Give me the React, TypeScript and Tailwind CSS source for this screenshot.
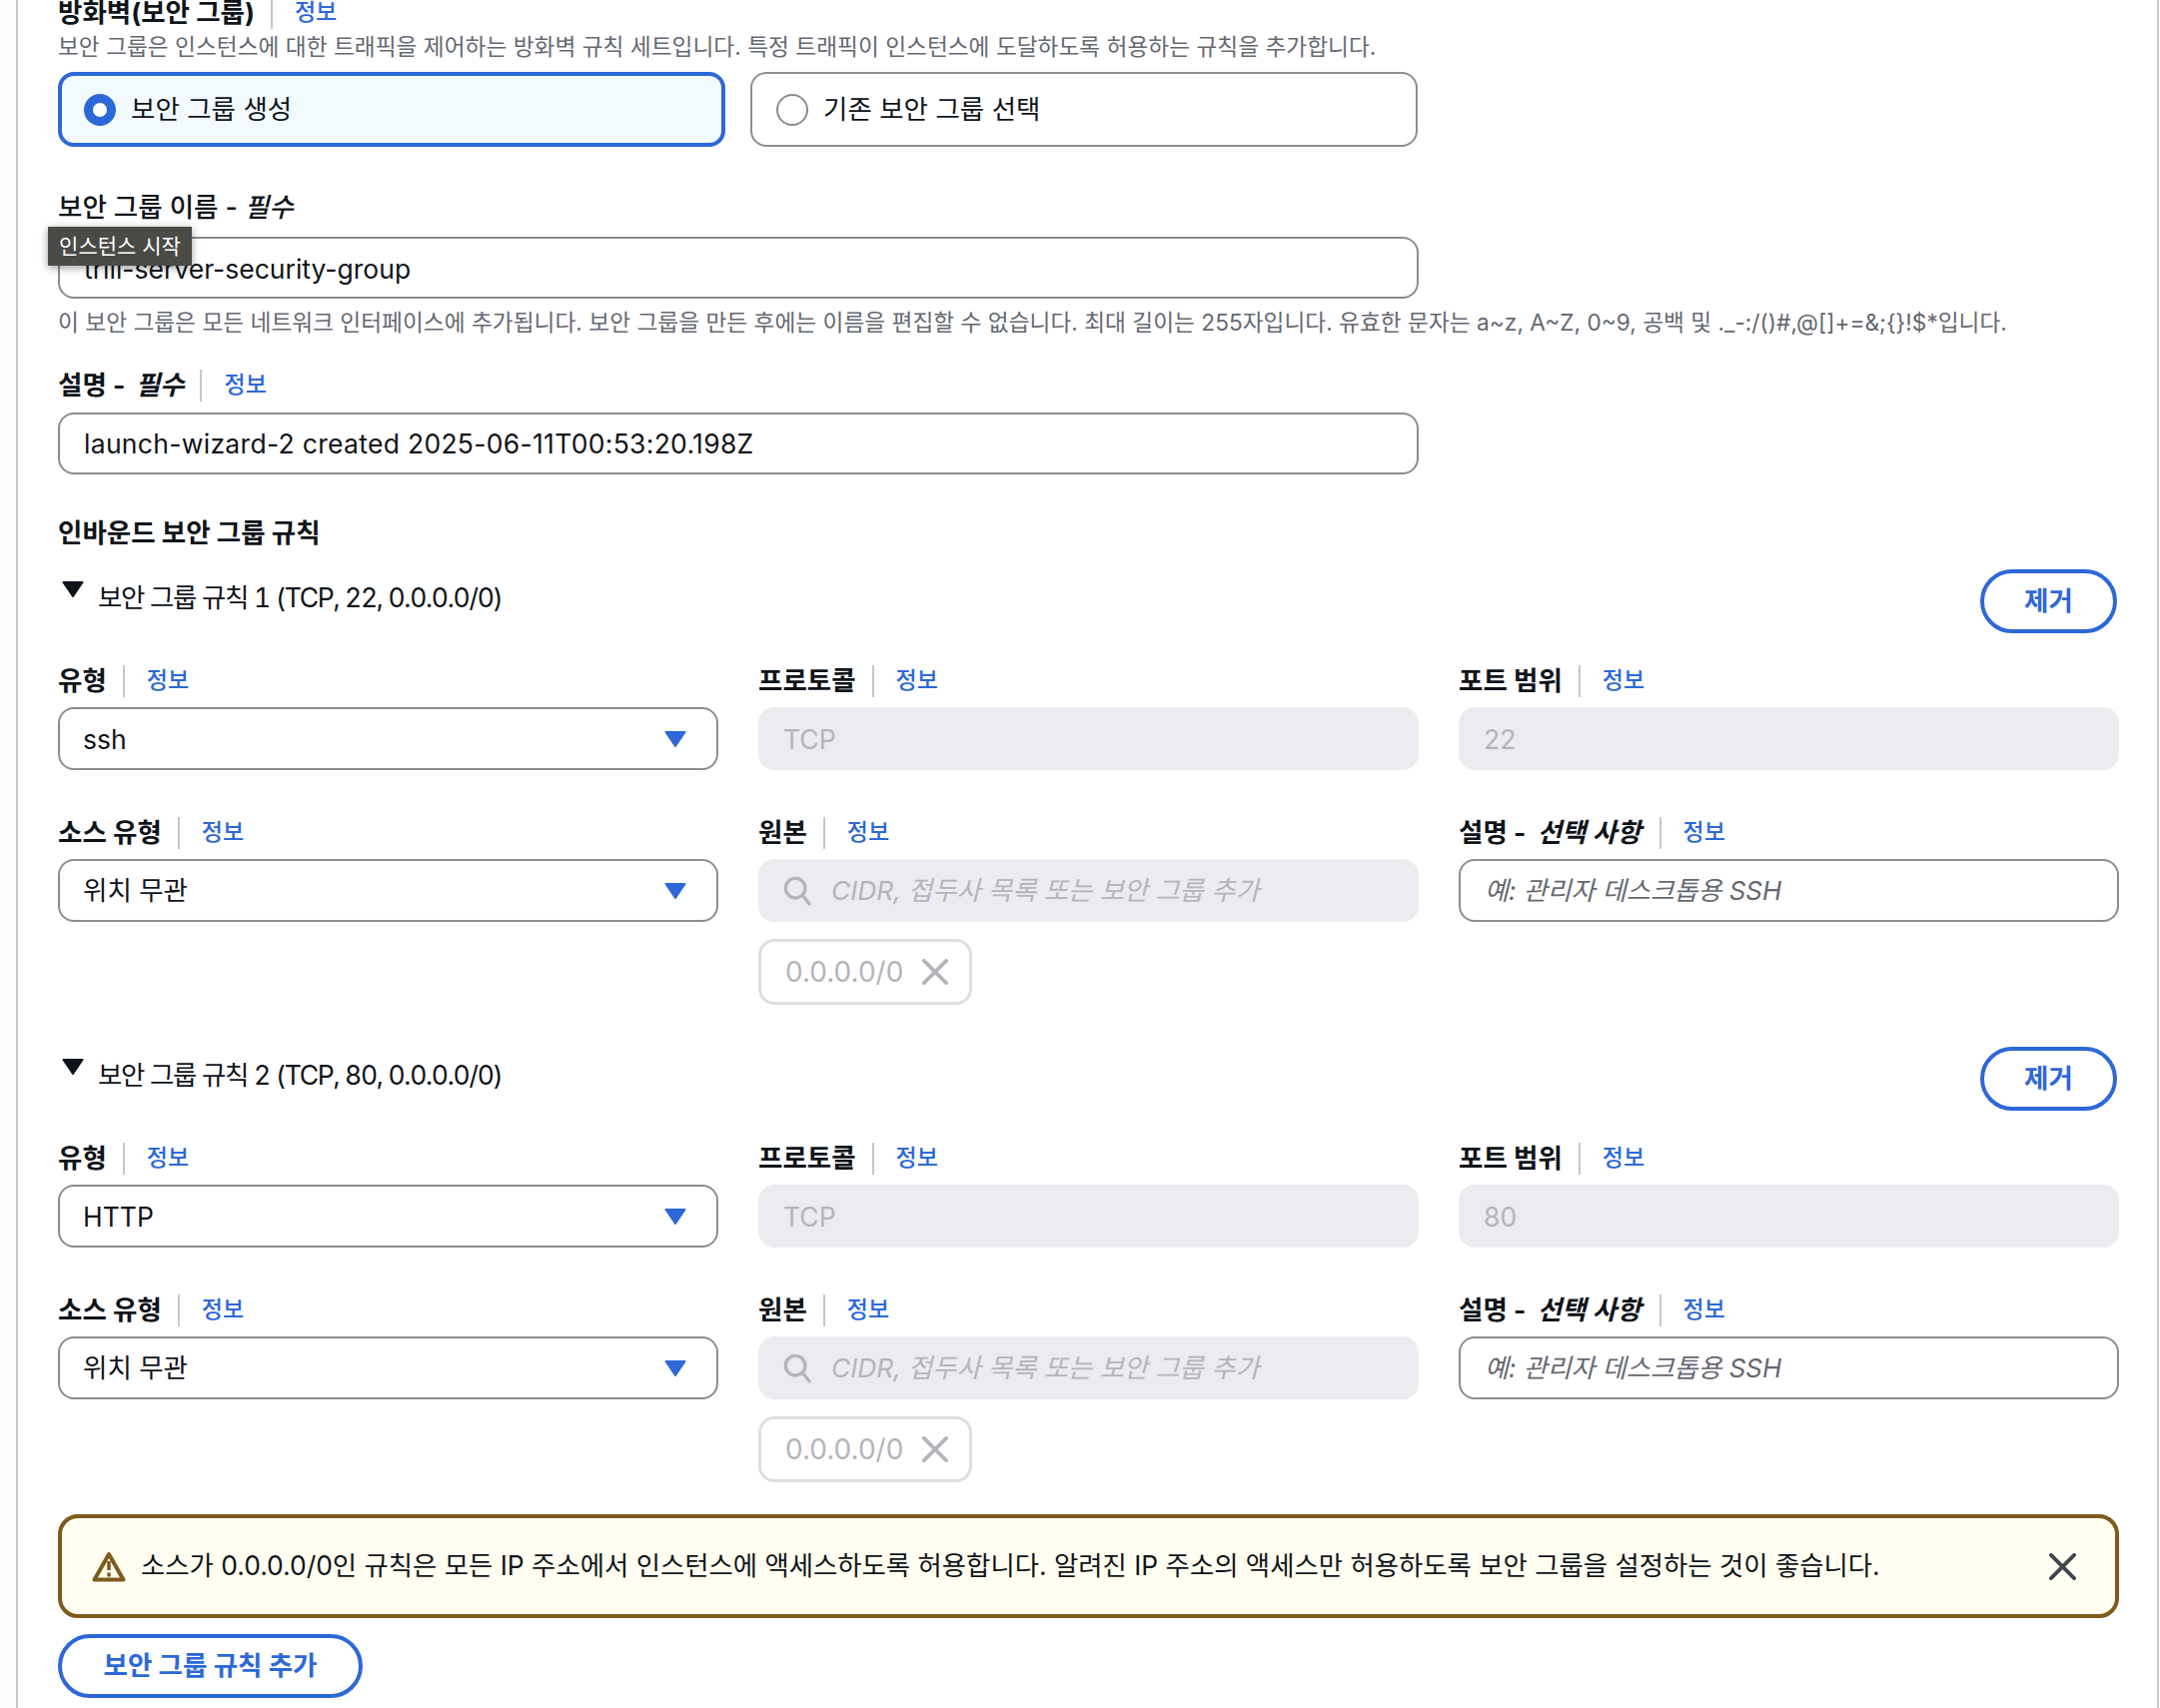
import React from 'react';

const Info: React.FC = () => (
  <>
    <span className="ml-[16px] mr-[22px] h-[32px] w-[2px] bg-[#c6c6cd]" />
    <a className="mb-[2px] text-[23px] font-medium text-[#2d68d8]">정보</a>
  </>
);

const FieldLabel: React.FC<{ children: React.ReactNode }> = ({ children }) => (
  <div className="flex h-[32px] items-center text-[26.5px] font-bold leading-[32px] text-[#0f141a]">
    <span className="mb-[2px]">{children}</span>
    <Info />
  </div>
);

const Caret: React.FC = () => (
  <svg viewBox="0 0 22 16" className="h-[16px] w-[22px]">
    <path d="M1.5 1h19L11 15z" fill="#2d68d8" stroke="#2d68d8" strokeWidth="2" strokeLinejoin="round" />
  </svg>
);

const Select: React.FC<{ value: string; latin?: boolean }> = ({ value, latin }) => (
  <div className="mt-[10px] flex h-[63px] items-center justify-between rounded-[16px] border-2 border-[#8c8c94] bg-white pl-[23px] pr-[30px] text-[26.5px] text-[#0f141a]">
    <span className={latin ? 'pt-[2px]' : ''}>{value}</span>
    <Caret />
  </div>
);

const Disabled: React.FC<{ value: string }> = ({ value }) => (
  <div className="mt-[10px] flex h-[63px] items-center rounded-[16px] bg-[#ebebf0] px-[25px] pt-[2px] text-[26.5px] text-[#b4b4bb]">
    {value}
  </div>
);

const CloseIcon: React.FC<{ color: string; size: number }> = ({ color, size }) => (
  <svg viewBox="0 0 28 28" width={size} height={size} fill="none" stroke={color} strokeWidth="4" strokeLinecap="round">
    <path d="M2 2l24 24M26 2L2 26" />
  </svg>
);

// one inbound rule block
const Rule: React.FC<{ index: number; port: string; type: string }> = ({ index, port, type }) => (
  <div>
    <div className="flex h-[63px] items-start justify-between">
      <div className="flex items-start pt-[12px] text-[26.5px] tabular-nums leading-[32px] tracking-[-1.3px] text-[#0f141a]">
        <svg viewBox="0 0 22 16" className="ml-[4px] h-[16px] w-[22px]">
          <path d="M1.5 1h19L11 15z" fill="#0f141a" stroke="#0f141a" strokeWidth="2" strokeLinejoin="round" />
        </svg>
        <span className="ml-[14px]">
          보안 그룹 규칙 {index} (TCP, {port}, 0.0.0.0/0)
        </span>
      </div>
      <button className="mr-[2px] h-[64px] w-[137px] rounded-[32px] border-[4px] border-[#2d68d8] text-[26.5px] font-bold text-[#2d68d8]">
        제거
      </button>
    </div>

    <div className="mt-[33px] grid grid-cols-3 gap-x-[40px] gap-y-[47px]">
      <div>
        <FieldLabel>유형</FieldLabel>
        <Select value={type} latin />
      </div>
      <div>
        <FieldLabel>프로토콜</FieldLabel>
        <Disabled value="TCP" />
      </div>
      <div>
        <FieldLabel>포트 범위</FieldLabel>
        <Disabled value={port} />
      </div>

      <div>
        <FieldLabel>소스 유형</FieldLabel>
        <Select value="위치 무관" />
      </div>
      <div>
        <FieldLabel>원본</FieldLabel>
        <div className="mt-[10px] flex h-[63px] items-center rounded-[16px] bg-[#ebebf0] pl-[25px] text-[26.3px] italic text-[#b4b4bb]">
          <svg viewBox="0 0 30 32" className="mr-[20px] h-[30px] w-[28px]" fill="none" stroke="#b4b4bb" strokeWidth="3.5" strokeLinecap="round">
            <circle cx="13" cy="13" r="10.5" />
            <path d="M21 21l7 9" />
          </svg>
          CIDR, 접두사 목록 또는 보안 그룹 추가
        </div>
        <div className="mt-[17px] flex h-[66px] w-[214px] items-center rounded-[16px] border-[3px] border-[#dedee3] bg-white pl-[24px] text-[28px] text-[#b4b4bb]">
          0.0.0.0/0
          <span className="ml-[19px] flex">
            <CloseIcon color="#b4b4bb" size={26} />
          </span>
        </div>
      </div>
      <div>
        <FieldLabel>
          설명 -&nbsp;<i className="ml-[5px] mr-[2px]">선택 사항</i>
        </FieldLabel>
        <div className="mt-[10px] flex h-[63px] items-center rounded-[16px] border-2 border-[#8c8c94] bg-white pl-[24px] text-[26px] italic text-[#656871]">
          예: 관리자 데스크톱용 SSH
        </div>
      </div>
    </div>
  </div>
);

export default function App() {
  return (
    <div className="relative flex h-[1710px] w-[2162px] overflow-hidden bg-white font-['Inter','Noto_Sans_CJK_KR',sans-serif] text-[#0f141a]">
      <div className="w-[16px] shrink-0 bg-[#fbfbfb]" />
      <main className="w-[2145px] shrink-0 border-x-[2px] border-[#c6c6cd] bg-white pl-[40px] pr-[38px]">
        {/* firewall heading, cut off by the top of the page */}
        <div className="mt-[-3px] flex h-[32px] items-center text-[26.5px] font-bold">
          방화벽(보안 그룹)
          <Info />
        </div>
        <p className="mt-[2px] text-[22.7px] leading-[32px] text-[#656871]">
          보안 그룹은 인스턴스에 대한 트래픽을 제어하는 방화벽 규칙 세트입니다. 특정 트래픽이 인스턴스에 도달하도록 허용하는 규칙을 추가합니다.
        </p>

        <div className="mt-[9px] flex gap-x-[25px]">
          <div className="flex h-[75px] w-[668px] items-center rounded-[16px] border-[4px] border-[#2d68d8] bg-[#f3faff] pl-[22px] text-[26.5px]">
            <span className="h-[32px] w-[32px] rounded-full border-[9px] border-[#2d68d8] bg-white" />
            <span className="ml-[15px] pt-[1px]">보안 그룹 생성</span>
          </div>
          <div className="flex h-[75px] w-[668px] items-center rounded-[16px] border-2 border-[#8c8c94] bg-white pl-[24px] text-[26.5px]">
            <span className="h-[32px] w-[32px] rounded-full border-2 border-[#8c8c94] bg-white" />
            <span className="ml-[15px] pt-[1px]">기존 보안 그룹 선택</span>
          </div>
        </div>

        <div className="mt-[44px] text-[26.5px] font-medium leading-[32px]">
          보안 그룹 이름 - <i>필수</i>
        </div>
        <div className="mt-[14px] flex h-[62px] w-[1362px] items-center rounded-[16px] border-2 border-[#8c8c94] pl-[24px] pt-[3px] text-[26.5px]">
          trill-server-security-group
        </div>
        <p className="mt-[8px] text-[22.7px] leading-[32px] text-[#656871]">
          이 보안 그룹은 모든 네트워크 인터페이스에 추가됩니다. 보안 그룹을 만든 후에는 이름을 편집할 수 없습니다. 최대 길이는 255자입니다. 유효한 문자는 a~z, A~Z, 0~9, 공백 및 ._-:/()#,@[]+=&amp;;{'{}'}!$*입니다.
        </p>

        <div className="mt-[31px] flex h-[32px] items-center text-[26.5px] font-bold">
          설명 -&nbsp;<i className="ml-[4px]">필수</i>
          <Info />
        </div>
        <div className="mt-[11px] flex h-[62px] w-[1362px] items-center rounded-[16px] border-2 border-[#8c8c94] pl-[24px] pt-[2px] text-[26.5px] tracking-[0.3px]">
          launch-wizard-2 created 2025-06-11T00:53:20.198Z
        </div>

        <div className="mt-[42px] text-[26.5px] font-bold leading-[32px]">인바운드 보안 그룹 규칙</div>

        <div className="mt-[21px]">
          <Rule index={1} port="22" type="ssh" />
        </div>
        <div className="mt-[42px]">
          <Rule index={2} port="80" type="HTTP" />
        </div>

        <div className="mt-[32px] flex h-[104px] items-center rounded-[20px] border-[4px] border-[#7e5a1c] bg-[#fffef0] pl-[30px] pr-[39px] text-[26.4px]">
          <svg viewBox="0 0 34 31" className="h-[31px] w-[34px] shrink-0" fill="none" stroke="#7e5a1c" strokeWidth="4" strokeLinejoin="round">
            <path d="M17 3L2.5 28.5h29z" />
            <path d="M17 10v9M17 21.5v4" strokeWidth="3.5" />
          </svg>
          <span className="ml-[15px] flex-1">
            소스가 0.0.0.0/0인 규칙은 모든 IP 주소에서 인스턴스에 액세스하도록 허용합니다. 알려진 IP 주소의 액세스만 허용하도록 보안 그룹을 설정하는 것이 좋습니다.
          </span>
          <CloseIcon color="#424650" size={27} />
        </div>

        <button className="mt-[16px] h-[64px] w-[305px] rounded-[32px] border-[4px] border-[#2d68d8] text-[26.5px] font-bold text-[#2d68d8]">
          보안 그룹 규칙 추가
        </button>
      </main>

      {/* tooltip over the name input */}
      <div className="absolute left-[48px] top-[227px] flex h-[39px] w-[144px] items-center justify-center bg-[#4a4a46] text-[21px] text-white shadow-[0_2px_8px_rgba(0,0,0,0.4)]">
        인스턴스 시작
      </div>
    </div>
  );
}
